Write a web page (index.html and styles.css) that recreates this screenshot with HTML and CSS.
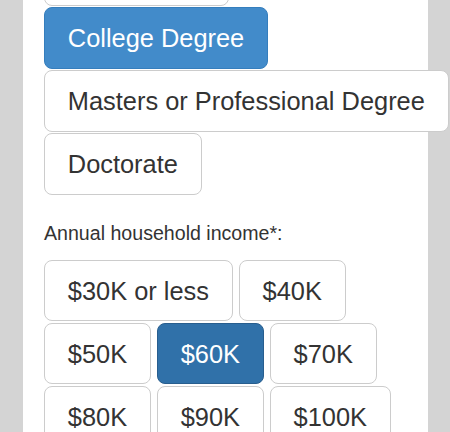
FILE: index.html
```html
<!DOCTYPE html>
<html>
<head>
<meta charset="utf-8">
<link rel="stylesheet" href="styles.css">
</head>
<body>
<div class="page">
  <div class="panel">
    <div class="choices choices-first">
      <button class="opt">High School</button>
      <button class="opt opt-primary">College Degree</button>
      <button class="opt">Masters or Professional Degree</button>
      <button class="opt">Doctorate</button>
    </div>
    <label class="field-label">Annual household income*:</label>
    <div class="choices">
      <button class="opt">$30K or less</button>
      <button class="opt">$40K</button>
      <button class="opt">$50K</button>
      <button class="opt opt-active">$60K</button>
      <button class="opt">$70K</button>
      <button class="opt">$80K</button>
      <button class="opt">$90K</button>
      <button class="opt">$100K</button>
    </div>
  </div>
</div>
</body>
</html>
```

FILE: styles.css
```css
html, body {
  margin: 0;
  padding: 0;
  background: #d4d4d4;
  height: 100%;
  overflow: hidden;
}

.page {
  height: 100%;
  padding: 0 22px 0 22.5px;
  box-sizing: border-box;
}

.panel {
  display: flow-root;
  background: #ffffff;
  height: 100%;
  padding: 0 21.5px;
  box-sizing: border-box;
  font-family: "Liberation Sans", Arial, Helvetica, sans-serif;
  color: #333333;
}

.choices {
  display: flex;
  flex-wrap: wrap;
  gap: 1.5px 6px;
}

.choices-first {
  margin-top: -56px;
}

.opt {
  flex: 0 0 auto;
  font-family: "Liberation Sans", Arial, Helvetica, sans-serif;
  font-size: 25.4px;
  line-height: 31.5px;
  padding: 15px 22.8px 13px;
  border: 1px solid #cccccc;
  border-radius: 8px;
  background: #ffffff;
  color: #333333;
  white-space: nowrap;
  margin: 0;
}

.opt-primary {
  background: #428bca;
  border-color: #357ebd;
  color: #ffffff;
}

.opt-active {
  background: #3071a9;
  border-color: #285e8e;
  color: #ffffff;
}

.field-label {
  display: block;
  font-size: 19.6px;
  line-height: 28px;
  margin: 24.5px 0 12.5px;
}
```
